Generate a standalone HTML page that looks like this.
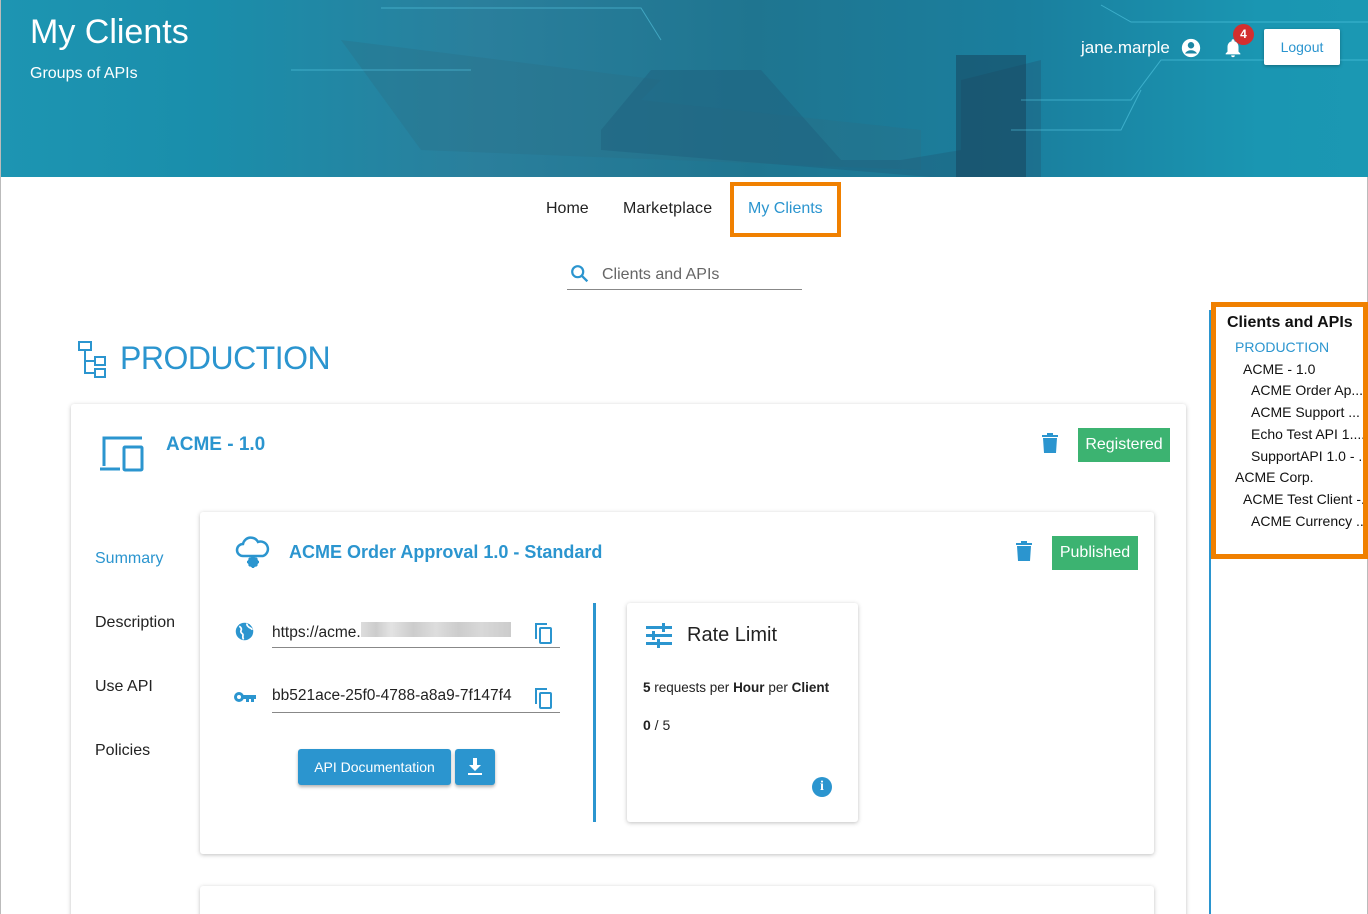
<!DOCTYPE html>
<html style="overflow:hidden;height:914px"><head><meta charset="utf-8"><style>
*{box-sizing:border-box;margin:0;padding:0}
body{width:1368px;height:914px;overflow:hidden;background:#fff;font-family:"Liberation Sans",sans-serif;color:#222;position:relative;border-left:1px solid #bbb;border-right:1px solid #bbb}
.abs{position:absolute}
.hdr{left:0;top:0;width:1368px;height:177px;background:linear-gradient(90deg,#1d95b2 0%,#1a8eab 15%,#2a7f9c 35%,#1f7590 55%,#1a7f9e 75%,#1a96b2 92%,#1b98b3 100%);overflow:hidden}
.blue{color:#2b95cf}
.card{background:#fff;box-shadow:0 1px 4px rgba(0,0,0,.25);border-radius:3px}
.badge{background:#3cb371;color:#fff;font-size:16px;padding:0 9px;height:34px;line-height:34px}
.field{border-bottom:1px solid #888;font-size:16px;color:#222}
</style></head><body>
<div class="abs hdr">
  <svg class="abs" style="left:0;top:0" width="1368" height="177">
    <path d="M340 40 L420 150 L920 170 L920 130 L640 100 L660 80 Z" fill="#2c6f88" opacity=".35"/>
    <path d="M600 130 L650 70 L760 70 L840 160 L900 160 L960 150 L960 80 L1040 60 L1040 177 L930 177 L600 150Z" fill="#1f5f7c" opacity=".45"/>
    <rect x="955" y="55" width="70" height="122" fill="#163f58" opacity=".5"/>
    <g stroke="#5fd4ee" stroke-width="1" fill="none" opacity=".5">
      <path d="M380 8 L640 8 L660 40"/><path d="M1100 5 L1130 22 L1368 22"/><path d="M290 70 L470 70"/><path d="M1020 100 L1130 100 L1160 60 L1368 60"/><path d="M1010 130 L1120 130 L1140 90"/>
    </g>
  </svg>
  <div class="abs" style="left:29px;top:13px;color:#fff;font-size:34px">My Clients</div>
  <div class="abs" style="left:29px;top:65px;color:#fff;font-size:16px">Groups of APIs</div>
  <div class="abs" style="left:1080px;top:38px;color:#fff;font-size:17px">jane.marple</div>
  <svg class="abs" style="left:1179px;top:37px" width="22" height="22" viewBox="0 0 24 24"><circle cx="12" cy="12" r="10" fill="#fff"/><circle cx="12" cy="9" r="3.5" fill="#1d86a3"/><path d="M5.5 18c1.5-2.5 4-3.5 6.5-3.5s5 1 6.5 3.5" fill="#1d86a3"/></svg>
  <svg class="abs" style="left:1221px;top:36px" width="22" height="24" viewBox="0 0 24 24"><path d="M12 22a2 2 0 0 0 2-2h-4a2 2 0 0 0 2 2zm6-6v-5c0-3-1.6-5.6-4.5-6.3V4a1.5 1.5 0 0 0-3 0v.7C7.6 5.4 6 8 6 11v5l-2 2v1h16v-1z" fill="#fff"/></svg>
  <div class="abs" style="left:1232px;top:24px;width:21px;height:21px;border-radius:50%;background:#d32f2f;color:#fff;font-size:12px;font-weight:bold;text-align:center;line-height:21px">4</div>
  <div class="abs" style="left:1263px;top:29px;width:76px;height:36px;background:#fff;color:#2b95cf;font-size:14px;text-align:center;line-height:36px;border-radius:2px;box-shadow:0 1px 3px rgba(0,0,0,.3)">Logout</div>
</div>
<div class="abs" style="left:545px;top:200px;font-size:16px">Home</div>
<div class="abs" style="left:622px;top:200px;font-size:16px;letter-spacing:.2px">Marketplace</div>
<div class="abs" style="left:729px;top:182px;width:111px;height:55px;border:4px solid #f08000"></div>
<div class="abs blue" style="left:747px;top:200px;font-size:16px">My Clients</div>
<svg class="abs" style="left:568px;top:263px" width="22" height="22" viewBox="0 0 24 24"><circle cx="9.5" cy="9.5" r="6" fill="none" stroke="#2b95cf" stroke-width="2.4"/><path d="M14 14l6 6" stroke="#2b95cf" stroke-width="2.6"/></svg>
<div class="abs" style="left:601px;top:266px;font-size:16px;color:#666">Clients and APIs</div>
<div class="abs" style="left:566px;top:289px;width:235px;height:1px;background:#888"></div>

<svg class="abs" style="left:77px;top:341px" width="30" height="38" viewBox="0 0 30 38" fill="none" stroke="#2b95cf" stroke-width="2"><rect x="1" y="1" width="12" height="8"/><rect x="17" y="16" width="10" height="8"/><rect x="17" y="28" width="10" height="8"/><path d="M7 9v23h10M7 20h10"/></svg>
<div class="abs blue" style="left:119px;top:340px;font-size:32px;letter-spacing:-.5px">PRODUCTION</div>

<div class="abs card" style="left:70px;top:404px;width:1115px;height:520px"></div>
<svg class="abs" style="left:98px;top:435px" width="46" height="38" viewBox="0 0 46 38" fill="none" stroke="#2b95cf" stroke-width="3"><path d="M5 31V3h38"/><path d="M1 34h20"/><rect x="25" y="12" width="18" height="23" rx="1"/></svg>
<div class="abs blue" style="left:165px;top:434px;font-size:19px;font-weight:bold">ACME - 1.0</div>
<svg class="abs" style="left:1040px;top:432px" width="18" height="22" viewBox="0 0 18 22"><path d="M1 3h16v2H1zM6 1h6v2H6zM2 6h14l-1 15H3z" fill="#2b95cf"/></svg>
<div class="abs badge" style="left:1077px;top:428px;width:92px;padding:0;text-align:center">Registered</div>

<div class="abs blue" style="left:94px;top:550px;font-size:16px">Summary</div>
<div class="abs" style="left:94px;top:614px;font-size:16px">Description</div>
<div class="abs" style="left:94px;top:678px;font-size:16px">Use API</div>
<div class="abs" style="left:94px;top:742px;font-size:16px">Policies</div>

<div class="abs card" style="left:199px;top:512px;width:954px;height:342px"></div>
<div class="abs card" style="left:199px;top:886px;width:954px;height:40px"></div>
<svg class="abs" style="left:234px;top:536px" width="36" height="34" viewBox="0 0 36 34" fill="none" stroke="#2b95cf" stroke-width="2.5"><path d="M8 20a6 6 0 0 1 0-12 8 8 0 0 1 15-2 6 6 0 0 1 5 14H8"/><circle cx="18" cy="26" r="4" fill="#2b95cf"/><path d="M18 20v12M12 26h12M14 22l8 8M22 22l-8 8"/></svg>
<div class="abs blue" style="left:288px;top:542px;font-size:18px;font-weight:bold">ACME Order Approval 1.0 - Standard</div>
<svg class="abs" style="left:1014px;top:540px" width="18" height="22" viewBox="0 0 18 22"><path d="M1 3h16v2H1zM6 1h6v2H6zM2 6h14l-1 15H3z" fill="#2b95cf"/></svg>
<div class="abs badge" style="left:1051px;top:536px;width:86px;padding:0;text-align:center">Published</div>

<svg class="abs" style="left:233px;top:621px" width="21" height="21" viewBox="0 0 24 24"><circle cx="12" cy="12" r="10" fill="#2b95cf"/><path d="M6 6c2 1 3 3 2 5s1 3 2 4-1 4 1 6M15 3c-1 2 1 3 2 4s3 1 4 3" stroke="#fff" stroke-width="2" fill="none"/></svg>
<div class="abs field" style="left:271px;top:622px;width:288px;height:26px;font-size:15.5px">https://acme.<span style="display:inline-block;width:150px;height:15px;background:linear-gradient(90deg,#ddd,#ccc 10%,#e3e3e3 20%,#ccc 35%,#ddd 50%,#ccc 65%,#d8d8d8 80%,#ccc)"></span></div>
<svg class="abs" style="left:533px;top:622px" width="20" height="22" viewBox="0 0 20 22" fill="none" stroke="#2b95cf" stroke-width="2"><path d="M2 17V2h11"/><rect x="6" y="6" width="11" height="15" rx="1"/></svg>
<svg class="abs" style="left:232px;top:689px" width="24" height="16" viewBox="0 0 24 16"><circle cx="6" cy="8" r="5" fill="#2b95cf"/><circle cx="6" cy="8" r="2" fill="#fff"/><path d="M10 6h13v4h-2v3h-3v-3h-2v3h-3v-3h-3z" fill="#2b95cf"/></svg>
<div class="abs field" style="left:271px;top:687px;width:288px;height:26px;overflow:hidden;white-space:nowrap;font-size:15.5px">bb521ace-25f0-4788-a8a9-7f147f4</div>
<svg class="abs" style="left:533px;top:687px" width="20" height="22" viewBox="0 0 20 22" fill="none" stroke="#2b95cf" stroke-width="2"><path d="M2 17V2h11"/><rect x="6" y="6" width="11" height="15" rx="1"/></svg>
<div class="abs" style="left:297px;top:749px;width:153px;height:36px;background:#2b95cf;color:#fff;font-size:14px;text-align:center;line-height:36px;border-radius:3px;box-shadow:0 2px 3px rgba(0,0,0,.3)">API Documentation</div>
<div class="abs" style="left:454px;top:749px;width:40px;height:36px;background:#2b95cf;border-radius:3px;box-shadow:0 2px 3px rgba(0,0,0,.3)"><svg style="margin:9px 0 0 12px" width="16" height="18" viewBox="0 0 16 18"><path d="M6 0h4v7h4l-6 6-6-6h4zM1 15h14v2H1z" fill="#fff"/></svg></div>
<div class="abs" style="left:592px;top:603px;width:3px;height:219px;background:#2b95cf"></div>

<div class="abs card" style="left:626px;top:603px;width:231px;height:219px"></div>
<svg class="abs" style="left:645px;top:623px" width="26" height="25" viewBox="0 0 26 25" fill="#2b95cf"><rect x="0" y="3" width="26" height="3"/><rect x="0" y="11" width="26" height="3"/><rect x="0" y="19" width="26" height="3"/><rect x="16" y="0" width="3" height="9" /><rect x="6" y="8" width="3" height="9"/><rect x="11" y="16" width="3" height="9"/></svg>
<div class="abs" style="left:686px;top:624px;font-size:20px">Rate Limit</div>
<div class="abs" style="left:642px;top:680px;font-size:13.5px"><b>5</b> requests per <b>Hour</b> per <b>Client</b></div>
<div class="abs" style="left:642px;top:717px;font-size:14px"><b>0</b> / 5</div>
<div class="abs" style="left:811px;top:777px;width:20px;height:20px;border-radius:50%;background:#2b95cf;color:#fff;font-size:14px;font-weight:bold;text-align:center;line-height:20px;font-family:'Liberation Serif',serif">i</div>

<div class="abs" style="left:1208px;top:310px;width:2px;height:604px;background:#2b95cf"></div>
<div class="abs" style="left:1210px;top:302px;width:157px;height:257px;border:5px solid #f08000;background:#fff"></div>
<div class="abs" style="left:1226px;top:314px;font-size:16px;font-weight:bold;color:#111">Clients and APIs</div>
<div class="abs" style="left:1234px;top:337px;font-size:14px;line-height:21.7px;color:#111;white-space:nowrap;width:128px;overflow:hidden">
<div class="blue">PRODUCTION</div>
<div style="padding-left:8px">ACME - 1.0</div>
<div style="padding-left:16px">ACME Order Ap...</div>
<div style="padding-left:16px">ACME Support ...</div>
<div style="padding-left:16px">Echo Test API 1....</div>
<div style="padding-left:16px">SupportAPI 1.0 - ..</div>
<div>ACME Corp.</div>
<div style="padding-left:8px">ACME Test Client -..</div>
<div style="padding-left:16px">ACME Currency ...</div>
</div>
</body></html>
